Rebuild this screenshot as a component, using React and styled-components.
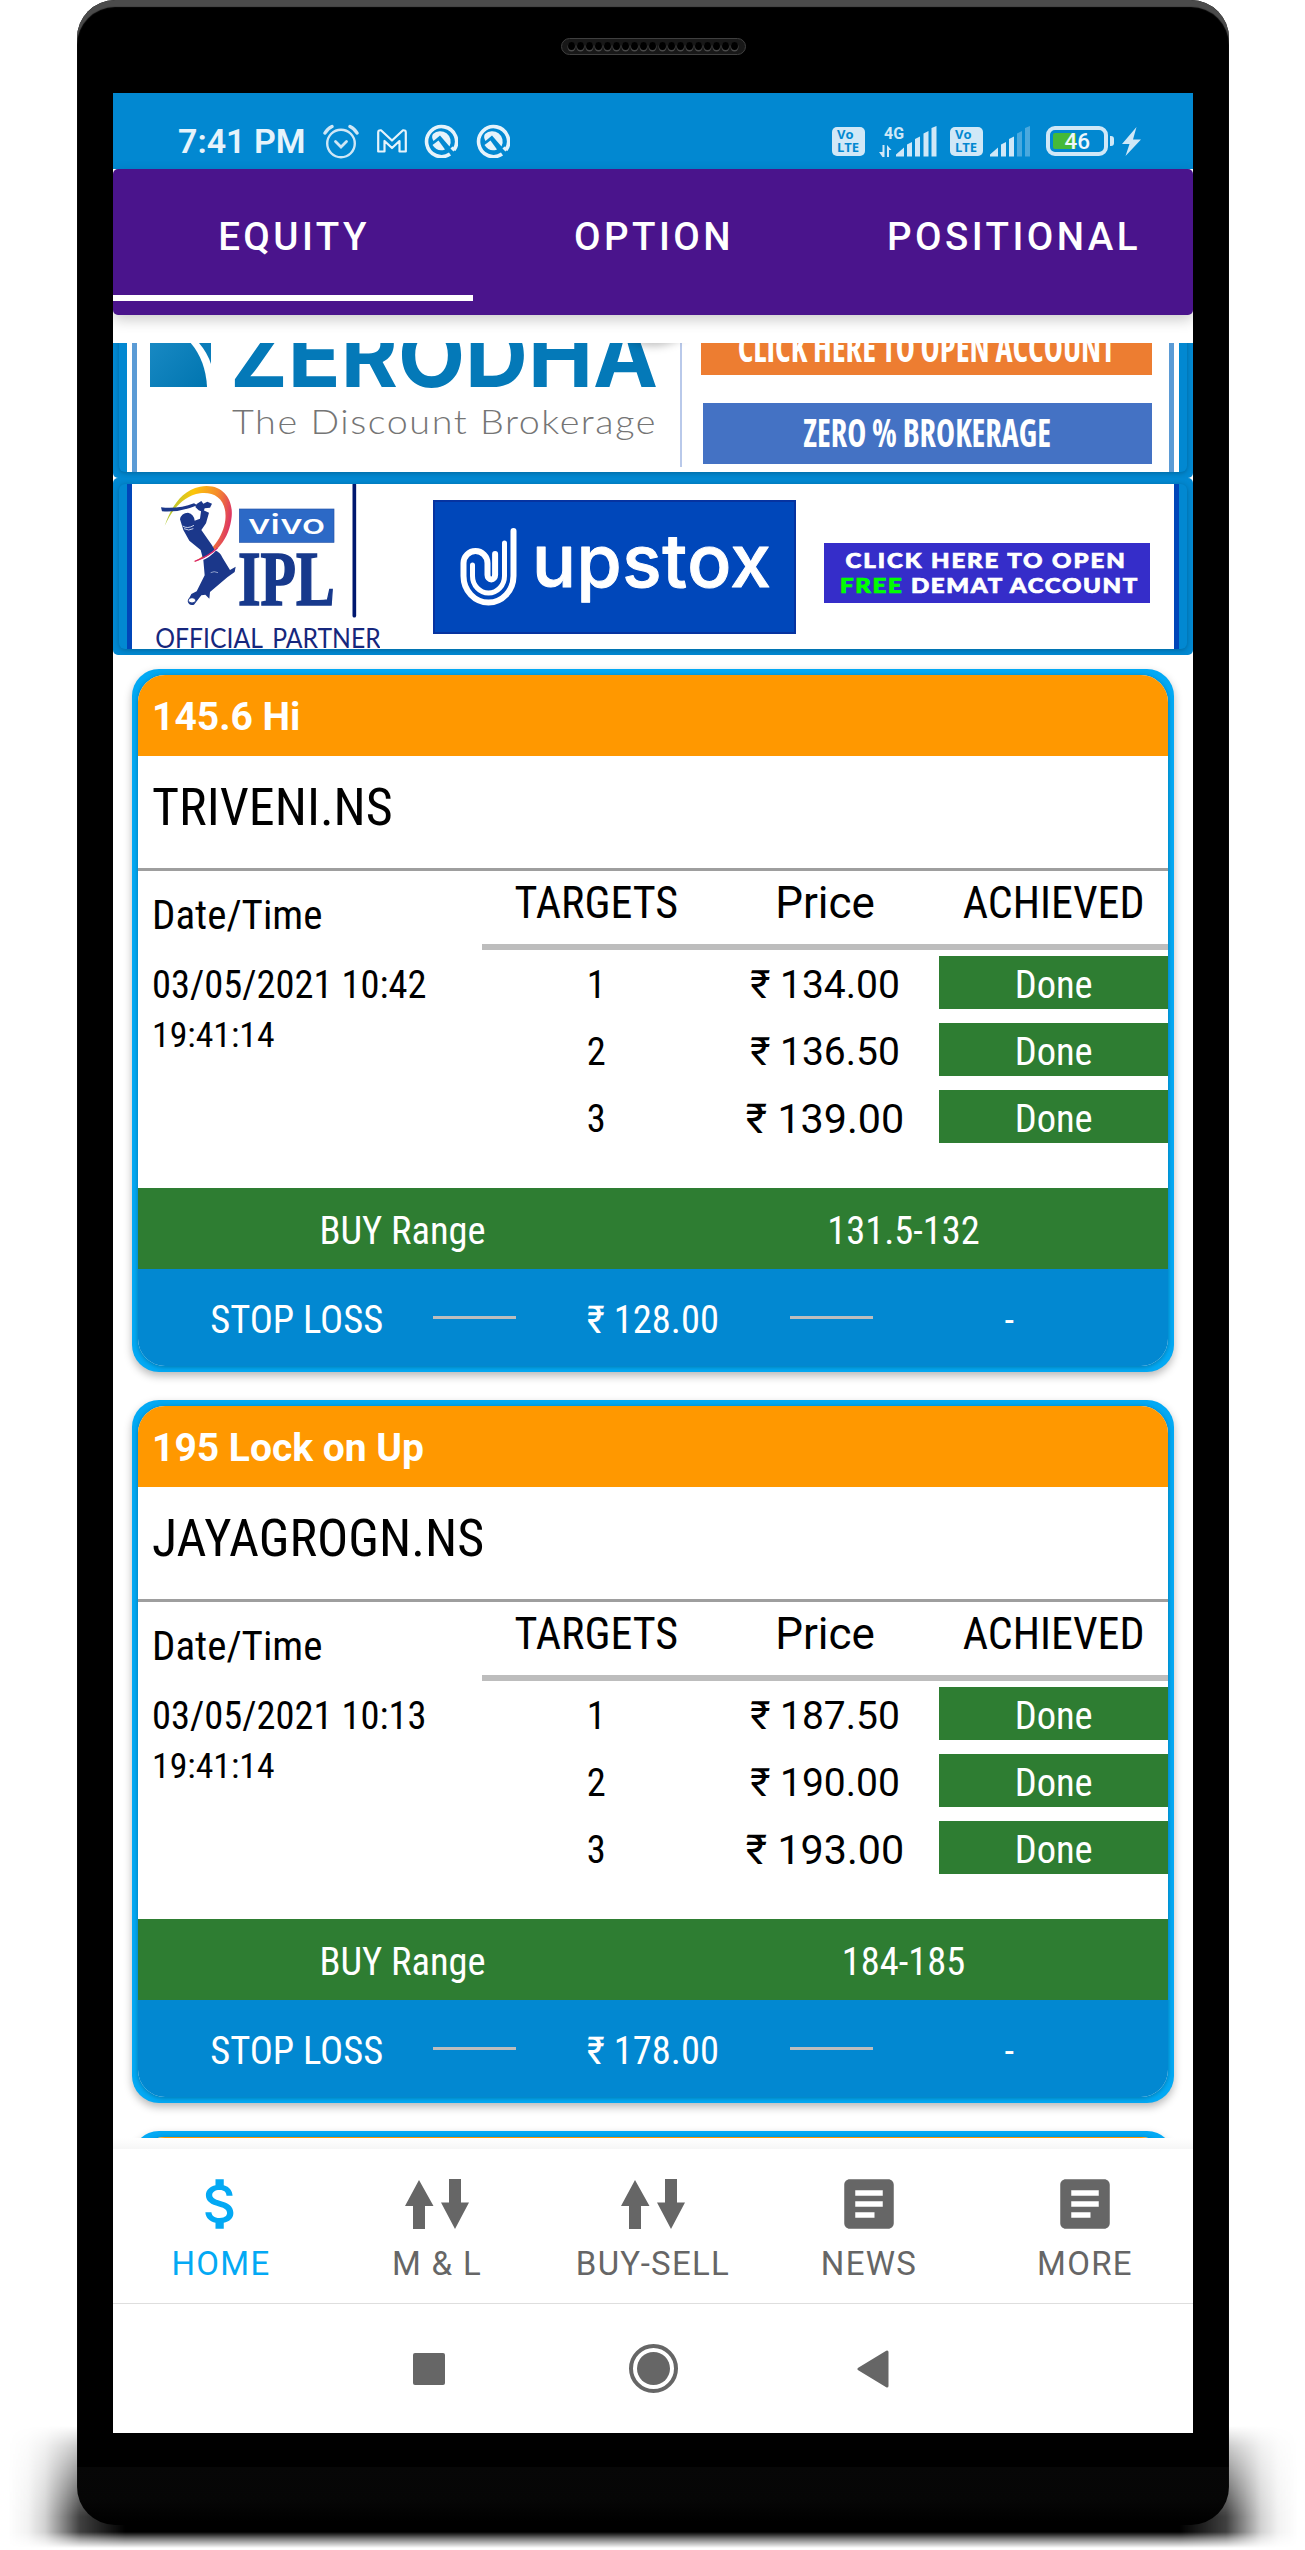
import React from 'react';
import styled, { createGlobalStyle, css } from 'styled-components';
import { MdAttachMoney, MdArticle } from 'react-icons/md';

const GlobalStyle = createGlobalStyle`
  body {
    margin: 0;
    background: #fff;
    font-family: Roboto, "Liberation Sans", sans-serif;
  }
  *, *::before, *::after { box-sizing: border-box; }
`;

const condensed = css`
  font-family: Roboto, "Liberation Sans", sans-serif;
  font-stretch: 75%;
`;

/* ---------- device ---------- */

const Stage = styled.div`
  position: relative;
  width: 1305px;
  height: 2550px;
  overflow: hidden;
  display: flex;
  justify-content: center;
  align-items: flex-start;
  padding-left: 1px;

  &::before {
    content: "";
    position: absolute;
    left: 0;
    right: 0;
    top: 2422px;
    height: 128px;
    background: linear-gradient(
      90deg,
      transparent 8px,
      rgba(0, 0, 0, 0.05) 28px,
      rgba(0, 0, 0, 0.18) 45px,
      rgba(0, 0, 0, 0.5) 65px,
      rgba(0, 0, 0, 0.75) 80px,
      #000 125px,
      #000 1180px,
      rgba(0, 0, 0, 0.75) 1226px,
      rgba(0, 0, 0, 0.5) 1241px,
      rgba(0, 0, 0, 0.18) 1261px,
      rgba(0, 0, 0, 0.05) 1278px,
      transparent 1298px
    );
    mask-image: linear-gradient(
      transparent 4px,
      rgba(0, 0, 0, 0.3) 25px,
      rgba(0, 0, 0, 0.8) 75px,
      #000 95px,
      #000 110px,
      rgba(0, 0, 0, 0.5) 117px,
      transparent 126px
    );
  }
`;

const Device = styled.div`
  position: relative;
  width: 1152px;
  height: 2525px;
  border-radius: 38px;
  background: linear-gradient(#000 2467px, #070707 2467px, #060606 2500px, #000 2522px);
  box-shadow: inset 0 7px 1px #4b4b4b;
  display: flex;
  flex-direction: column;
  align-items: center;
`;

const Earpiece = styled.div`
  height: 93px;
  padding-top: 38px;
`;

const Grille = styled.div`
  width: 185px;
  height: 17px;
  padding: 3px 6px;
  border-radius: 9px;
  border: 1.5px solid #3f3f3f;
  background: #181818;
  display: flex;
  justify-content: space-between;
`;

const Hole = styled.i`
  width: 7px;
  height: 8px;
  border-radius: 50%;
  background: #000;
  box-shadow: 0 1px 0 0.5px #4a4a4a;
`;

const Screen = styled.main`
  width: 1080px;
  height: 2340px;
  background: #fff;
  overflow: hidden;
  display: flex;
  flex-direction: column;
`;

/* ---------- status bar ---------- */

const StatusBar = styled.header`
  height: 76px;
  flex: none;
  padding: 20px 52px 0 65px;
  background: #0288d1;
  color: #e6f3fb;
  display: flex;
  align-items: center;
  justify-content: space-between;
`;

const StatusGroup = styled.div`
  display: flex;
  align-items: center;
  gap: ${(p) => p.$gap}px;
  svg { display: block; }
`;

const StatusSlot = styled.div`
  margin-right: ${(p) => p.$after}px;
`;

const Clock = styled.span`
  font-size: 34px;
  font-weight: 600;
  line-height: 40px;
`;

const VolteBadge = styled.div`
  width: 33px;
  height: 29px;
  border-radius: 5px;
  background: #d0e8f7;
  color: #0288d1;
  font: 700 13px/13px "Open Sans", sans-serif;
  padding: 1px 0 0 5px;
  white-space: pre-line;
`;

const AlarmIcon = () => (
  <svg width="36" height="36" viewBox="0 0 36 36" fill="none" stroke="#cfe7f6" strokeWidth="2.4" strokeLinecap="round">
    <circle cx="18" cy="20.5" r="13.8" />
    <path d="M12.5 18.5l5.5 5.5 5.5-5.5" strokeWidth="2.8" />
    <path d="M2 10q2.500-4.500 7-6.500M34 10q-2.500-4.500-7-6.500" strokeWidth="3.400" />
  </svg>
);

const MailIcon = () => (
  <svg width="30" height="24" viewBox="0 0 30 24" fill="none" stroke="#e6f3fb" strokeWidth="2.2" strokeLinejoin="round">
    <path d="M1.200 22V3.500Q1.200 1 4 1.300L15 11.500 26 1.300Q28.800 1 28.800 3.500V22.500H22.500V12L15 19 7.500 12V22.500H1.200Z" />
  </svg>
);

const AppRingIcon = () => (
  <svg width="34" height="34" viewBox="0 0 34 34">
    <path d="M30 26A15 15 0 1 0 26 30" fill="none" stroke="#e6f3fb" strokeWidth="3.600" />
    <path d="M30.500 26.500L27.500 23.500" stroke="#e6f3fb" strokeWidth="3" />
    <path d="M9 10A10.500 10.500 0 0 1 25.500 22.500L16 11.500 9.500 17Q7 13 9 10Z" fill="#e6f3fb" />
    <path d="M8.500 21L14.500 16.500 21 25.500Q13.500 28.500 8.500 21Z" fill="#e6f3fb" />
  </svg>
);

const DataSignalIcon = () => (
  <svg width="58" height="32" viewBox="0 0 58 32" fill="#d0e8f7">
    <text x="5" y="13.500" fontSize="17" fontWeight="700" textLength="20" lengthAdjust="spacingAndGlyphs" fontFamily="Roboto, sans-serif">4G</text>
    <path d="M3.500 20h2v12h-2l-3.500-5h3.500zM8 20l4.500 5h-2.500v7H8z" />
    <path d="M17 31.500v-2l8-7v9zM28 19.500l5-2.500v14.500h-5zM36 14l5-2.500v20h-5zM44.500 8.500l5-2.500v25.500h-5zM52.500 3l5-2v30.500h-5z" />
  </svg>
);

const WeakSignalIcon = () => (
  <svg width="40" height="32" viewBox="0 0 40 32" fill="#d0e8f7">
    <path d="M0 31.500v-2l8-7v9zM11 19.500l5-2.500v14.500h-5zM19 14l5-2.500v20h-5z" />
    <path d="M27 8.500l5-2.500v25.500h-5zM35 3l5-2v30.500h-5z" opacity="0.350" />
  </svg>
);

const BatteryIcon = () => (
  <svg width="68" height="30" viewBox="0 0 68 30">
    <rect x="2" y="2" width="58" height="26" rx="7" fill="none" stroke="#d0e8f7" strokeWidth="4" />
    <rect x="7" y="7" width="23" height="16" rx="2" fill="#45b939" />
    <path d="M64 10h1q3 0 3 3v4q0 3-3 3h-1z" fill="#d0e8f7" />
    <text x="18.500" y="23" fontSize="22.500" fontWeight="500" fill="#eef7fc" fontFamily="Roboto, sans-serif">46</text>
  </svg>
);

const BoltIcon = () => (
  <svg width="19" height="29" viewBox="0 0 19 29">
    <path d="M14.500 0L0 17h7.500L3.500 29 19 12.500h-8z" fill="#d0e8f7" />
  </svg>
);

/* ---------- tabs ---------- */

const Tabs = styled.nav`
  height: 146px;
  flex: none;
  background: #4a148c;
  border-radius: 5px;
  box-shadow: 0 5px 14px rgba(0, 0, 0, 0.2);
  display: grid;
  grid-template-columns: repeat(3, 1fr);
  align-items: start;
  z-index: 1;
`;

const Tab = styled.div`
  height: 132px;
  padding: 8px 0 0 2px;
  border-bottom: 6px solid ${(p) => (p.$active ? '#fff' : 'transparent')};
  color: #fff;
  font-size: 38.5px;
  font-weight: 500;
  letter-spacing: 3.440px;
  display: flex;
  align-items: center;
  justify-content: center;
`;

/* ---------- scrolling list ---------- */

const Viewport = styled.section`
  position: relative;
  height: 1795px;
  margin-top: 28px;
  flex: none;
  overflow: hidden;
`;

const RefreshShadow = styled.i`
  position: absolute;
  left: 485px;
  top: -111px;
  width: 110px;
  height: 110px;
  border-radius: 50%;
  box-shadow: 0 4px 9px rgba(0, 0, 0, 0.25);
`;

const Feed = styled.div`
  margin-top: -42px;
  display: flex;
  flex-direction: column;
`;

const BannerFrame = styled.article`
  height: 177px;
  padding: 6px;
  background: #0288d1;
  border-radius: 5px;
`;

const BannerCard = styled.div`
  height: 165px;
  padding: 0 8px;
  border-radius: 6px;
  background: #0288d1;
  box-shadow: 0 1px 5px rgba(0, 0, 0, 0.25);
`;

const Ad = styled.div`
  height: 165px;
  background: #fff;
  display: flex;
  overflow: hidden;
`;

const ZerodhaAd = styled(Ad)`
  padding: 0 5px 0 4px;
`;

const ZerodhaBody = styled.div`
  flex: 1;
  border: solid #5b9bd5;
  border-width: 0 5px;
  margin-left: 1px;
  padding-left: 13px;
  display: flex;
`;

const ThinRule = styled.i`
  width: 2px;
  height: 160px;
  margin: 0 19px 0 24px;
  background: #b9c9ea;
`;

const AdButtons = styled.div`
  width: 451px;
  padding-top: 7px;
  display: flex;
  flex-direction: column;
  gap: 28px;
`;

const AdButton = styled.div`
  height: 61px;
  margin-left: ${(p) => p.$indent}px;
  background: ${(p) => p.$color};
  color: #fff;
  display: flex;
  align-items: center;
  justify-content: center;
`;

const NarrowText = styled.span`
  font: 700 39px/50px "Open Sans", sans-serif;
  font-stretch: 75%;
  white-space: nowrap;
  transform: translateY(${(p) => p.$drop}px) scaleX(${(p) => p.$squeeze});
`;

const UpstoxAd = styled(Ad)`
  border: solid #0046b9;
  border-width: 0 5px;
  padding: 0 24px;
`;

const UpstoxBox = styled.div`
  width: 363px;
  height: 134px;
  margin: 16px 28px 0 53px;
  background: #0047ba;
  border: 2px solid #0633a0;
`;

const DematButton = styled.div`
  width: 326px;
  height: 60px;
  margin-top: 59px;
  background: #352dc9;
  color: #fff;
  display: flex;
  flex-direction: column;
  align-items: center;
  justify-content: center;
`;

const WideLine = styled.span`
  font: 900 20px/25px Lato, sans-serif;
  letter-spacing: ${(p) => p.$track}px;
  white-space: nowrap;
  -webkit-text-stroke: 0.700px currentColor;
  transform: translateX(${(p) => p.$shift}px) scaleX(1.2);
  b { color: #0f0; font-weight: 900; }
`;

const ZerodhaLogo = () => (
  <svg width="506" height="165" viewBox="150 307 506 165">
    <defs>
      <linearGradient id="kite" x1="0" y1="0" x2="1" y2="1">
        <stop offset="0" stopColor="#1c8cc6" />
        <stop offset="1" stopColor="#0075b0" />
      </linearGradient>
    </defs>
    <path d="M150 325H168Q205 345 207 387H150Z" fill="url(#kite)" />
    <path d="M178 325H211V364Q204 342 178 325Z" fill="#0a7cb9" />
    <text x="230" y="386.500" fontSize="88" fontWeight="650" fill="#0479b8" textLength="428" lengthAdjust="spacingAndGlyphs" fontFamily="Inter, sans-serif">ZERODHA</text>
    <text x="232" y="434" fontSize="34" fontWeight="300" letterSpacing="1.400" fill="#757575" textLength="425" lengthAdjust="spacingAndGlyphs" fontFamily="Lato, sans-serif">The Discount Brokerage</text>
  </svg>
);

const IplLogo = () => (
  <svg width="224" height="165" viewBox="108 42 672 495">
    <defs>
      <linearGradient id="swoosh" x1="0" y1="0.400" x2="1" y2="0.600">
        <stop offset="0" stopColor="#a8c83c" />
        <stop offset="0.350" stopColor="#fcc60a" />
        <stop offset="0.700" stopColor="#f58a2c" />
        <stop offset="1" stopColor="#d9266e" />
      </linearGradient>
    </defs>
    <path d="M134 168C150 120 180 62 240 50C310 38 340 90 335 140C328 205 290 258 220 276C275 248 310 200 316 150C322 90 285 64 240 70C190 78 155 120 134 168Z" fill="url(#swoosh)" />
    <g fill="#1b378a">
      <path d="M123 112Q175 118 222 100L232 106Q180 128 126 124Z" />
      <path d="M230 102l14-9 6 8 12-6 14 6-6 12-16 2-4 12-14-6-10-10z" />
      <path d="M180 148Q184 128 204 128Q222 132 224 152L240 146L244 118L267 128L258 160L244 180L276 226L284 240Q302 248 308 264L330 300L347 290L344 306L322 322L270 366L268 386L256 374L244 376L222 404Q206 408 203 394L214 372L230 364L254 316L250 270L242 240L208 212L190 180Z" />
    </g>
    <path d="M290 236Q268 262 238 272" stroke="#fff" strokeWidth="5" fill="none" />
    <path d="M292 234Q268 258 224 274" stroke="#d9266e" strokeWidth="4" fill="none" />
    <path d="M188 168q14 10 34-2M192 176q14 8 28 0" stroke="#c9d3ea" strokeWidth="3" fill="none" />
    <path d="M272 308q10-6 22 0" stroke="#c9d3ea" strokeWidth="2" fill="none" />
    <ellipse cx="216" cy="391" rx="11" ry="8" fill="#fff" stroke="#1b378a" strokeWidth="3" />
    <rect x="358" y="117" width="284" height="100" fill="#2c69c6" stroke="#2453a8" strokeWidth="2" />
    <text x="384" y="192" fontSize="82" fontWeight="500" fill="#fff" textLength="232" lengthAdjust="spacingAndGlyphs" fontFamily="Inter, sans-serif">vivo</text>
    <text x="354" y="405" fontSize="236" fontWeight="700" fill="#17398c" stroke="#17398c" strokeWidth="5" textLength="290" lengthAdjust="spacingAndGlyphs" fontFamily="Liberation Serif, serif">IPL</text>
    <text x="106" y="535" fontSize="78" fill="#16277d" textLength="676" wordSpacing="12" lengthAdjust="spacingAndGlyphs" fontFamily="Lato, sans-serif">OFFICIAL PARTNER</text>
    <path d="M703 44V437" stroke="#00176f" strokeWidth="11" strokeLinecap="round" />
  </svg>
);

const UpstoxLogo = () => (
  <svg width="359" height="130" viewBox="435 502 359 130">
    <g fill="none" stroke="#fff" strokeWidth="6" strokeLinecap="round" strokeLinejoin="round">
      <path d="M513.500 531V576a25 26.500 0 0 1-50 0V563a12 12 0 0 1 24 0V575a3.800 4.500 0 0 0 7.600 0V554" />
      <path d="M504.500 543V576a16 17 0 0 1-32 0V565" strokeWidth="5" />
    </g>
    <text x="532" y="586.500" fontSize="73" fontWeight="550" fill="#fff" stroke="#fff" strokeWidth="1" strokeLinejoin="round" textLength="239" lengthAdjust="spacing" fontFamily="Inter, sans-serif">upstox</text>
  </svg>
);

/* ---------- tip cards ---------- */

const Tips = styled.div`
  padding: 14px 19px 0;
  display: flex;
  flex-direction: column;
  gap: 28px;
`;

const TipFrame = styled.article`
  height: 703px;
  flex: none;
  padding: 6px;
  border-radius: 27px;
  background: #03a9f4;
  box-shadow: 0 4px 8px rgba(0, 0, 0, 0.28);
`;

const TipCard = styled.div`
  height: 691px;
  border-radius: 27px;
  overflow: hidden;
  background: #fff;
  box-shadow: 0 1px 5px rgba(0, 0, 0, 0.3);
`;

const TipHeadline = styled.div`
  height: 81px;
  padding: 4px 14px 0;
  background: #ff9800;
  color: #fff;
  font-size: 39px;
  font-weight: 700;
  line-height: 77px;
`;

const TipSymbol = styled.div`
  ${condensed}
  height: 115px;
  padding: 0 14px;
  border-bottom: 3px solid #9e9e9e;
  color: #000;
  font-size: 52px;
  line-height: 103px;
`;

const TipBody = styled.div`
  height: 317px;
  display: grid;
  grid-template-columns: 344px 1fr;
`;

const Dates = styled.div`
  ${condensed}
  padding: 20px 0 0 14px;
  display: flex;
  flex-direction: column;
`;

const DateLabel = styled.span`
  font-size: 41px;
  line-height: 48px;
`;

const DateValue = styled.span`
  margin-top: 23px;
  font-size: 38.500px;
  line-height: 46px;
`;

const TimeValue = styled.span`
  margin-top: 6px;
  font-size: 35.750px;
  line-height: 42px;
`;

const TargetTable = styled.div`
  display: flex;
  flex-direction: column;
`;

const TargetHead = styled.div`
  height: 79px;
  padding-bottom: 9px;
  border-bottom: 6px solid #bdbdbd;
  display: grid;
  grid-template-columns: repeat(3, 1fr);
  align-items: center;
  font-size: 44px;
  text-align: center;
`;

const HeadCell = styled.span`
  font-stretch: ${(p) => (p.$narrow ? '75%' : '100%')};
`;

const TargetRows = styled.div`
  padding-top: 6px;
  display: flex;
  flex-direction: column;
  gap: 14px;
`;

const TargetRow = styled.div`
  height: 53px;
  display: grid;
  grid-template-columns: repeat(3, 1fr);
  text-align: center;
  font-size: 38.500px;
  line-height: 48px;

  > * {
    height: 53px;
    padding-top: 5px;
  }
`;

const TargetNo = styled.span`
  ${condensed}
`;

const TargetPrice = styled.span`
  font-size: ${(p) => (p.$large ? 41.250 : 39)}px;
`;

const DoneCell = styled.span`
  ${condensed}
  background: #2e7d32;
  color: #fff;
`;

const RangeBar = styled.div`
  ${condensed}
  height: 81px;
  padding: 4px 14px 0;
  background: #2e7d32;
  color: #fff;
  font-size: 38.500px;
  line-height: 77px;
  display: grid;
  grid-template-columns: 1fr 1fr;
  text-align: center;
`;

const StopBar = styled.div`
  ${condensed}
  height: 97px;
  padding: 4px 22px 0;
  background: #0288d1;
  color: #fff;
  font-size: 38.500px;
  display: flex;
  align-items: center;
  text-align: center;
`;

const StopCell = styled.span`
  flex: 1 1 0;
`;

const StopRule = styled.i`
  width: 83px;
  height: 3px;
  margin-bottom: 4px;
  background: #bdbdbd;
`;

/* ---------- bottom navigation ---------- */

const BottomNav = styled.nav`
  height: 166px;
  flex: none;
  padding-top: 11px;
  border-bottom: 1px solid #dedede;
  background: linear-gradient(#fff, #f6f6f6 11px, #fff 11px);
  display: grid;
  grid-template-columns: repeat(5, 1fr);
`;

const NavItem = styled.div`
  padding-top: 22px;
  color: ${(p) => (p.$active ? '#03a9f4' : '#666')};
  display: flex;
  flex-direction: column;
  align-items: center;
  svg { display: block; width: 66px; height: 66px; }
`;

const NavLabel = styled.span`
  margin-top: 7px;
  font-size: 33px;
  line-height: 40px;
  letter-spacing: 1.300px;
`;

const SwapArrows = () => (
  <svg viewBox="0 0 66 66" fill="currentColor">
    <path d="M15 9L29.500 35H21V58H9V35H1z" />
    <path d="M51 58L65 31.500H57V8H45V31.500H37z" />
  </svg>
);

const SystemNav = styled.nav`
  flex: 1;
  background: #fff;
  display: flex;
  align-items: center;
  padding-left: 300px;
`;

const SquareKey = styled.i`
  width: 32px;
  height: 32px;
  border-radius: 2px;
  background: #666;
`;

const CircleKey = styled.i`
  width: 49px;
  height: 49px;
  margin: 0 179px 0 184px;
  padding: 4px;
  border: 4px solid #666;
  border-radius: 50%;
  background: #666 content-box;
`;

const BackKey = () => (
  <svg width="32" height="38" viewBox="0 0 32 38">
    <path d="M2 19L30 2V36Z" fill="#666" stroke="#666" strokeWidth="3" strokeLinejoin="round" />
  </svg>
);

/* ---------- data ---------- */

const tips = [
  {
    headline: '145.6 Hi',
    symbol: 'TRIVENI.NS',
    date: '03/05/2021 10:42',
    time: '19:41:14',
    targets: ['134.00', '136.50', '139.00'],
    range: '131.5-132',
    stop: '128.00',
  },
  {
    headline: '195 Lock on Up',
    symbol: 'JAYAGROGN.NS',
    date: '03/05/2021 10:13',
    time: '19:41:14',
    targets: ['187.50', '190.00', '193.00'],
    range: '184-185',
    stop: '178.00',
  },
];

const navItems = [
  { label: 'HOME', Icon: MdAttachMoney, active: true },
  { label: 'M & L', Icon: SwapArrows },
  { label: 'BUY-SELL', Icon: SwapArrows },
  { label: 'NEWS', Icon: MdArticle },
  { label: 'MORE', Icon: MdArticle },
];

const Tip = ({ tip }) => (
  <TipFrame>
    <TipCard>
      <TipHeadline>{tip.headline}</TipHeadline>
      <TipSymbol>{tip.symbol}</TipSymbol>
      <TipBody>
        <Dates>
          <DateLabel>Date/Time</DateLabel>
          <DateValue>{tip.date}</DateValue>
          <TimeValue>{tip.time}</TimeValue>
        </Dates>
        <TargetTable>
          <TargetHead>
            <HeadCell $narrow>TARGETS</HeadCell>
            <HeadCell>Price</HeadCell>
            <HeadCell $narrow>ACHIEVED</HeadCell>
          </TargetHead>
          <TargetRows>
            {tip.targets.map((price, i) => (
              <TargetRow key={price}>
                <TargetNo>{i + 1}</TargetNo>
                <TargetPrice $large={i === 2}>₹ {price}</TargetPrice>
                <DoneCell>Done</DoneCell>
              </TargetRow>
            ))}
          </TargetRows>
        </TargetTable>
      </TipBody>
      <RangeBar>
        <span>BUY Range</span>
        <span>{tip.range}</span>
      </RangeBar>
      <StopBar>
        <StopCell>STOP LOSS</StopCell>
        <StopRule />
        <StopCell>₹ {tip.stop}</StopCell>
        <StopRule />
        <StopCell>-</StopCell>
      </StopBar>
    </TipCard>
  </TipFrame>
);

export default function App() {
  return (
    <Stage>
      <GlobalStyle />
      <Device>
        <Earpiece>
          <Grille>
            {Array.from({ length: 19 }, (_, i) => (
              <Hole key={i} />
            ))}
          </Grille>
        </Earpiece>
        <Screen>
          <StatusBar>
            <StatusGroup $gap={17.500}>
              <Clock>7:41 PM</Clock>
              <AlarmIcon />
              <MailIcon />
              <AppRingIcon />
              <AppRingIcon />
            </StatusGroup>
            <StatusGroup $gap={0}>
              <StatusSlot $after={14}><VolteBadge>{'Vo\nLTE'}</VolteBadge></StatusSlot>
              <StatusSlot $after={13}><DataSignalIcon /></StatusSlot>
              <StatusSlot $after={7}><VolteBadge>{'Vo\nLTE'}</VolteBadge></StatusSlot>
              <StatusSlot $after={16}><WeakSignalIcon /></StatusSlot>
              <StatusSlot $after={8}><BatteryIcon /></StatusSlot>
              <BoltIcon />
            </StatusGroup>
          </StatusBar>
          <Tabs>
            <Tab $active>EQUITY</Tab>
            <Tab>OPTION</Tab>
            <Tab>POSITIONAL</Tab>
          </Tabs>
          <Viewport>
            <Feed>
              <BannerFrame>
                <BannerCard>
                  <ZerodhaAd>
                    <ZerodhaBody>
                      <ZerodhaLogo />
                      <ThinRule />
                      <AdButtons>
                        <AdButton $color="#ed7d31" $indent={0}>
                          <NarrowText $squeeze={0.830} $drop={2}>CLICK HERE TO OPEN ACCOUNT</NarrowText>
                        </AdButton>
                        <AdButton $color="#4472c4" $indent={2}>
                          <NarrowText $squeeze={0.825} $drop={-2}>ZERO % BROKERAGE</NarrowText>
                        </AdButton>
                      </AdButtons>
                    </ZerodhaBody>
                  </ZerodhaAd>
                </BannerCard>
              </BannerFrame>
              <BannerFrame>
                <BannerCard>
                  <UpstoxAd>
                    <IplLogo />
                    <UpstoxBox>
                      <UpstoxLogo />
                    </UpstoxBox>
                    <DematButton>
                      <WideLine $track={1.600} $shift={-1}>CLICK HERE TO OPEN</WideLine>
                      <WideLine $track={1.400} $shift={3}>
                        <b>FREE</b> DEMAT ACCOUNT
                      </WideLine>
                    </DematButton>
                  </UpstoxAd>
                </BannerCard>
              </BannerFrame>
              <Tips>
                {tips.map((tip) => (
                  <Tip key={tip.symbol} tip={tip} />
                ))}
                <TipFrame>
                  <TipCard>
                    <TipHeadline />
                  </TipCard>
                </TipFrame>
              </Tips>
            </Feed>
            <RefreshShadow />
          </Viewport>
          <BottomNav>
            {navItems.map(({ label, Icon, active }) => (
              <NavItem key={label} $active={active}>
                <Icon />
                <NavLabel>{label}</NavLabel>
              </NavItem>
            ))}
          </BottomNav>
          <SystemNav>
            <SquareKey />
            <CircleKey />
            <BackKey />
          </SystemNav>
        </Screen>
      </Device>
    </Stage>
  );
}
